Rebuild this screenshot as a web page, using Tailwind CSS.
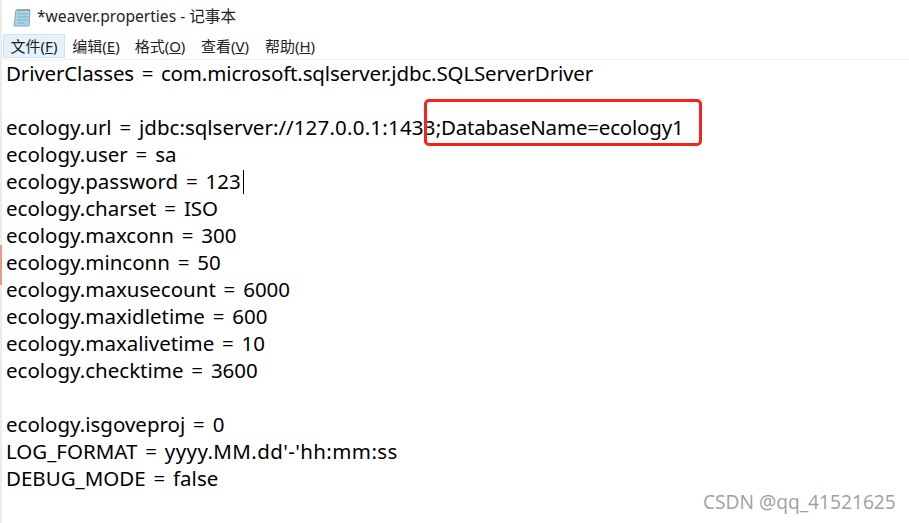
<!DOCTYPE html>
<html lang="zh">
  <head>
    <meta charset="UTF-8" />
    <title>weaver.properties</title>
    <script src="https://cdn.jsdelivr.net/npm/@tailwindcss/browser@4"></script>
  </head>
  <body class="w-[909px] h-[523px] overflow-hidden bg-white text-black font-['Noto_Sans','Noto_Sans_CJK_SC',sans-serif] relative">
    <header class="h-[33px] flex items-center pl-[13px] gap-[5px]">
      <svg width="19" height="20" viewBox="0 0 19 20">
        <path d="M3 3h14l-1 16H1z" fill="#a9d3e6" stroke="#8aa6b3" />
        <path d="M4 2h13v2H4z" fill="#8fa5b0" />
        <path d="M5 7h10M5 10h10M4 13h10M4 16h7" stroke="#7fb0c8" />
      </svg>
      <span class="text-[15.6px] text-[#222]">*weaver.properties - 记事本</span>
    </header>
    <nav class="h-[26px] flex items-center pl-[3px] text-[15px] text-[#222]">
      <span class="h-[24px] w-[62px] flex items-center justify-center bg-[#e5f1fb] border border-[#cce4f7]">文件(<u>F</u>)</span>
      <span class="w-[62px] text-center">编辑(<u>E</u>)</span>
      <span class="w-[66px] text-center">格式(<u>O</u>)</span>
      <span class="w-[64px] text-center">查看(<u>V</u>)</span>
      <span class="w-[66px] text-center">帮助(<u>H</u>)</span>
    </nav>
    <div class="h-px bg-[#f0f0f0]"></div>
    <main class="flex flex-col pl-[6px] text-[20.5px] leading-[27px] whitespace-pre [word-spacing:2.5px]">
      <div class="tracking-[-0.15px]">DriverClasses = com.microsoft.sqlserver.jdbc.SQLServerDriver</div>
      <div class="h-[27px]"></div>
      <div>ecology.url = jdbc:sqlserver://<span class="tracking-[0.2px]">127.0.0.1:1433</span><span class="tracking-[-0.2px]">;DatabaseName=ecology1</span></div>
      <div>ecology.user = sa</div>
      <div class="flex">ecology.password = 123<span class="w-px h-[24px] ml-[2px] bg-black mt-[2px]"></span></div>
      <div>ecology.charset = ISO</div>
      <div>ecology.maxconn = 300</div>
      <div>ecology.minconn = 50</div>
      <div>ecology.maxusecount = 6000</div>
      <div>ecology.maxidletime = 600</div>
      <div>ecology.maxalivetime = 10</div>
      <div>ecology.checktime = 3600</div>
      <div class="h-[27px]"></div>
      <div>ecology.isgoveproj = 0</div>
      <div>LOG_FORMAT = <span class="tracking-[0.4px]">yyyy.MM.dd'-'hh:mm:ss</span></div>
      <div>DEBUG_MODE = false</div>
    </main>
    <div class="absolute left-0 top-0 w-[2px] h-[523px] bg-[#ececec]"></div>
    <div class="absolute left-0 top-[245px] w-[2px] h-[40px] bg-[#e79a86]"></div>
    <div class="absolute left-[424px] top-[99px] w-[278px] h-[47px] border-[3px] border-[#f5231c] rounded-[5px]"></div>
    <div class="absolute left-[703px] top-[490px] text-[19.2px] leading-[24px] text-[#a0a0a0] font-['Open_Sans',sans-serif]">CSDN @qq_41521625</div>
  </body>
</html>
